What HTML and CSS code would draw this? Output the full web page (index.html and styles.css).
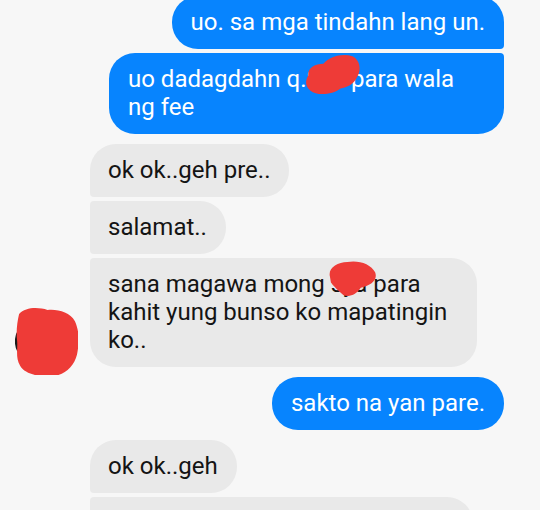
FILE: index.html
```html
<!DOCTYPE html>
<html>
<head>
<meta charset="utf-8">
<link rel="stylesheet" href="styles.css">
</head>
<body>
<div class="chat">
  <div class="group out">
    <div class="bubble b-out first">uo. sa mga tindahn lang un.</div>
    <div class="bubble b-out last wide-out">uo dadagdahn q.Sya para wala<br>ng fee
      <svg class="scrib scrib-a" viewBox="0 0 52 38"><path d="M4 20 C3 13 10 9 18 9 C24 2 36 -1 45 2 C53 6 53 16 49 22 C46 28 40 31 34 32 C26 38 12 39 6 34 C1 30 1 25 4 20 Z" fill="#ee3b37"/></svg>
    </div>
  </div>

  <div class="group in">
    <div class="avatar-col">
      <svg class="avatar" viewBox="0 0 62 66">
        <path d="M5 22 C1 28 1 36 4 42" stroke="#1b1b1b" stroke-width="4" fill="none"/>
        <path d="M4 6 C10 -1 23 -1 32 2 C42 1 54 4 59 13 C64 24 63 36 61 46 C58 58 48 67 36 67 C26 68 10 66 5 57 C0 48 3 40 2 32 C1 24 2 14 4 6 Z" fill="#ee3b37"/>
      </svg>
    </div>
    <div class="msgs">
      <div class="bubble b-in first">ok ok..geh pre..</div>
      <div class="bubble b-in mid">salamat..</div>
      <div class="bubble b-in last wide-in">sana magawa mong sya para<br>kahit yung bunso ko mapatingin<br>ko..
        <svg class="scrib scrib-b" viewBox="0 0 48 36"><path d="M3 15 C1 7 10 1 20 1 C31 -1 43 3 47 11 C50 19 42 24 33 26 C29 32 22 36 16 33 C11 29 7 25 4 21 Z" fill="#ee3b37"/></svg>
      </div>
    </div>
  </div>

  <div class="group out">
    <div class="bubble b-out single">sakto na yan pare.</div>
  </div>

  <div class="group in">
    <div class="avatar-col"></div>
    <div class="msgs">
      <div class="bubble b-in first">ok ok..geh</div>
      <div class="bubble b-in mid wide-in2 blank"></div>
    </div>
  </div>
</div>
</body>
</html>
```

FILE: styles.css
```css
html, body {
  margin: 0;
  padding: 0;
  background: #f7f7f7;
  overflow: hidden;
}

.chat {
  display: flex;
  flex-direction: column;
  gap: 10px;
  margin-top: -4px;
  padding-right: 36px;
  font-family: Roboto, "Noto Sans", sans-serif;
  font-size: 24px;
  line-height: 28px;
}

.group {
  display: flex;
}

.group.out {
  flex-direction: column;
  align-items: flex-end;
  gap: 4px;
}

.group.in {
  flex-direction: row;
  align-items: flex-end;
}

.avatar-col {
  width: 90px;
  flex: none;
  display: flex;
  align-items: flex-end;
}

.avatar {
  width: 63px;
  height: 67px;
  margin-left: 15px;
  margin-bottom: -8px;
  display: block;
}

.msgs {
  display: flex;
  flex-direction: column;
  align-items: flex-start;
  gap: 4px;
}

.bubble {
  position: relative;
  padding: 12px 19px 13px 19px;
  white-space: nowrap;
  box-sizing: border-box;
}

.b-out {
  background: #0784fe;
  color: #ffffff;
}

.b-in {
  background: #e9e9e9;
  color: #141414;
  padding-left: 18px;
}

.b-out.first { border-radius: 26px 26px 4px 26px; }
.b-out.last { border-radius: 26px 4px 26px 26px; }
.b-out.single { border-radius: 26px; }

.b-in.first { border-radius: 26px 26px 26px 4px; }
.b-in.mid { border-radius: 4px 26px 26px 4px; }
.b-in.last { border-radius: 4px 26px 26px 26px; }

.wide-out { width: 395px; }
.wide-in { width: 387px; }
.wide-in2 { width: 383px; }
.blank { height: 53px; }

.scrib {
  position: absolute;
  display: block;
}

.scrib-a {
  left: 195px;
  top: 1px;
  width: 56px;
  height: 41px;
}

.scrib-b {
  left: 236px;
  top: 3px;
  width: 51px;
  height: 37px;
}
```
